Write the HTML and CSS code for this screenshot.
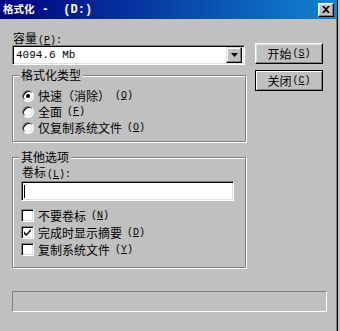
FILE: index.html
```html
<!DOCTYPE html>
<html lang="zh-CN">
<head>
  <meta charset="UTF-8" />
  <title>格式化 - (D:)</title>
  <link rel="stylesheet" href="styles.css">
</head>
<body>
  <div class="window">
    <div class="titlebar">
      <span class="title">格式化<span class="title-rest"> -  (D:)</span></span>
      <span class="close-btn">
        <svg width="8" height="7" viewBox="0 0 8 7"><path d="M0 0h2l2 2 2-2h2L5 3.5 8 7H6L4 5 2 7H0l3-3.5z" fill="#000"/></svg>
      </span>
    </div>
    <div class="main">
      <div class="left-col">
        <div class="label">容量<span class="key">(<u>P</u>):</span></div>
        <div class="combo">
          <span class="combo-text">4094.6 Mb</span>
          <span class="combo-btn">
            <svg width="7" height="4" viewBox="0 0 7 4"><path d="M0 0h7L3.5 4z" fill="#000"/></svg>
          </span>
        </div>

        <fieldset class="group group-type">
          <legend>格式化类型</legend>
          <div class="group-body">
            <div class="option"><span class="radio checked"></span>快速（消除）<span class="key">(<u>Q</u>)</span></div>
            <div class="option"><span class="radio"></span>全面<span class="key">(<u>F</u>)</span></div>
            <div class="option"><span class="radio"></span>仅复制系统文件<span class="key">(<u>O</u>)</span></div>
          </div>
        </fieldset>

        <fieldset class="group group-other">
          <legend>其他选项</legend>
          <div class="group-body">
            <div class="label label-volume">卷标<span class="key">(<u>L</u>):</span></div>
            <div class="textbox"><span class="caret"></span></div>
            <div class="checks">
              <div class="option check-row"><span class="checkbox"></span>不要卷标<span class="key">(<u>N</u>)</span></div>
              <div class="option check-row"><span class="checkbox checked">
                <svg width="7" height="7" viewBox="0 0 7 7"><path d="M0 2v3l2 2 5-5V0L2 5z" fill="#000"/></svg>
              </span>完成时显示摘要<span class="key">(<u>D</u>)</span></div>
              <div class="option check-row"><span class="checkbox"></span>复制系统文件<span class="key">(<u>Y</u>)</span></div>
            </div>
          </div>
        </fieldset>
      </div>

      <div class="right-col">
        <div class="btn">开始<span class="key">(<u>S</u>)</span></div>
        <div class="btn btn-default">关闭<span class="key">(<u>C</u>)</span></div>
      </div>
    </div>
    <div class="progress"></div>
  </div>
</body>
</html>
```

FILE: styles.css
```css
body {
  margin: 0;
  width: 340px;
  height: 331px;
  overflow: hidden;
  background: #c0c0c0;
  font-family: "Noto Sans CJK SC", sans-serif;
  font-size: 12px;
  line-height: 14px;
  color: #000;
}
.window {
  width: 337px;
  height: 331px;
  border-right: 1px solid #000;
  box-shadow: inset -1px 0 #808080;
  display: flex;
  flex-direction: column;
}
.titlebar {
  height: 19px;
  width: 337px;
  background: linear-gradient(to right, #000080, #1084d0);
  display: flex;
  align-items: center;
  justify-content: space-between;
  padding: 0 3px 0 3px;
  box-sizing: border-box;
}
.title {
  color: #fff;
  font-size: 10.5px;
  font-weight: bold;
  line-height: 13px;
}
.title-rest {
  font-family: "Liberation Mono", monospace;
  font-size: 12px;
  white-space: pre;
}
.close-btn {
  width: 16px;
  height: 14px;
  box-sizing: border-box;
  background: #c0c0c0;
  border: 1px solid;
  border-color: #fff #000 #000 #fff;
  box-shadow: inset -1px -1px #808080, inset 1px 1px #dfdfdf;
  display: flex;
  align-items: center;
  justify-content: center;
}
.key {
  font-family: "Liberation Mono", monospace;
  font-size: 10px;
  margin-left: 1px;
}
.main {
  display: flex;
  align-items: flex-start;
  padding: 12px 0 0 12px;
}
.left-col {
  width: 234px;
  display: flex;
  flex-direction: column;
}
.right-col {
  margin: 12px 0 0 9px;
  display: flex;
  flex-direction: column;
  gap: 6px;
}
.label {
  height: 14px;
  padding-left: 1px;
}
.combo {
  width: 233px;
  height: 20px;
  box-sizing: border-box;
  background: #fff;
  border: 1px solid;
  border-color: #808080 #fff #fff #808080;
  box-shadow: inset 1px 1px #000, inset -1px -1px #dfdfdf;
  display: flex;
  align-items: center;
  justify-content: space-between;
  padding: 2px;
}
.combo-text {
  font-family: "Liberation Mono", monospace;
  font-size: 11px;
  padding-left: 1px;
}
.combo-btn {
  width: 16px;
  height: 16px;
  box-sizing: border-box;
  background: #c0c0c0;
  border: 1px solid;
  border-color: #dfdfdf #000 #000 #dfdfdf;
  box-shadow: inset -1px -1px #808080, inset 1px 1px #fff;
  display: flex;
  align-items: center;
  justify-content: center;
}
.group {
  margin: 0;
  padding: 0;
  width: 234px;
  box-sizing: border-box;
  border: 1px solid #808080;
  box-shadow: inset 1px 1px #fff, 1px 1px #fff;
}
.group legend {
  margin-left: 6px;
  padding: 0 2px;
  background: #c0c0c0;
  line-height: 14px;
}
.group-type {
  margin-top: 3px;
}
.group-type .group-body {
  padding: 6px 0 5px 9px;
}
.group-other {
  margin-top: 8px;
}
.group-other .group-body {
  padding: 0 0 9px 8px;
}
.label-volume {
  margin-top: 1px;
}
.option {
  display: flex;
  align-items: center;
  height: 16px;
  gap: 4px;
}
.radio {
  width: 12px;
  height: 12px;
  box-sizing: border-box;
  border-radius: 50%;
  background: #fff;
  border: 1px solid;
  border-color: #808080 #fff #fff #808080;
  box-shadow: inset 1px 1px #000, inset -1px -1px #dfdfdf;
  display: flex;
  align-items: center;
  justify-content: center;
}
.radio.checked::after {
  content: "";
  width: 4px;
  height: 4px;
  border-radius: 50%;
  background: #000;
}
.textbox {
  margin-top: 2px;
  width: 213px;
  height: 20px;
  box-sizing: border-box;
  background: #fff;
  border: 1px solid;
  border-color: #808080 #fff #fff #808080;
  box-shadow: inset 1px 1px #000, inset -1px -1px #dfdfdf;
  display: flex;
  align-items: center;
  padding-left: 2px;
}
.caret {
  width: 1px;
  height: 13px;
  background: #000;
}
.checks {
  margin-top: 6px;
}
.check-row {
  height: 17px;
  gap: 4px;
}
.checkbox {
  width: 13px;
  height: 13px;
  box-sizing: border-box;
  background: #fff;
  border: 1px solid;
  border-color: #808080 #fff #fff #808080;
  box-shadow: inset 1px 1px #000, inset -1px -1px #dfdfdf;
  display: flex;
  align-items: center;
  justify-content: center;
}
.btn {
  width: 68px;
  height: 21px;
  box-sizing: border-box;
  border: 1px solid;
  border-color: #fff #000 #000 #fff;
  box-shadow: inset -1px -1px #808080, inset 1px 1px #dfdfdf;
  display: flex;
  align-items: center;
  justify-content: center;
}
.btn-default {
  border-color: #000;
  box-shadow: inset 1px 1px #fff, inset -1px -1px #808080;
}
.progress {
  margin: 23px 0 0 12px;
  width: 315px;
  height: 21px;
  box-sizing: border-box;
  border: 1px solid;
  border-color: #808080 #fff #fff #808080;
}
```
